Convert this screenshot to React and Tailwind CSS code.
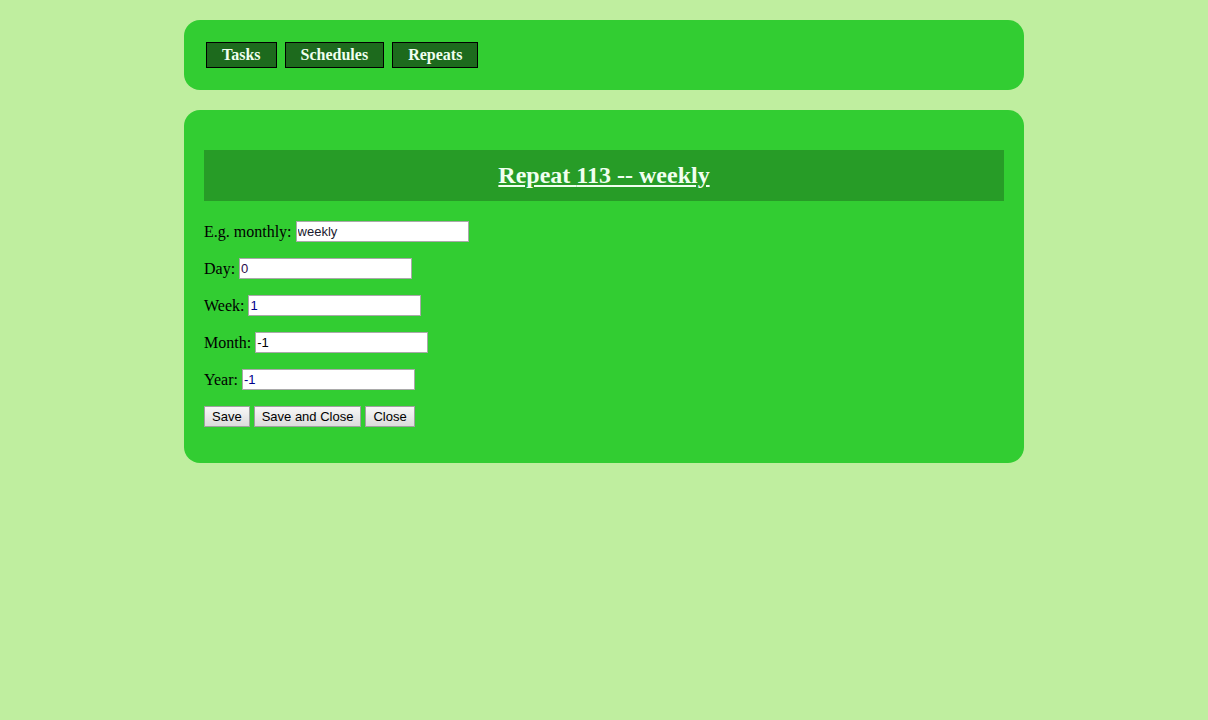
import { useState } from 'react'

const serif = { fontFamily: '"Liberation Serif", "Times New Roman", serif' }

function NavButton({ children }) {
  return (
    <button className="h-[26px] px-[15px] bg-[#1d6a1d] border border-black text-[#f0fff0] font-bold text-[16px] leading-none">
      {children}
    </button>
  )
}

function Field({ label, value, color }) {
  return (
    <div className="flex items-center h-[21px] mb-4">
      <span className="text-[16px] text-black mr-[4px]">{label}</span>
      <input
        className={`h-[21px] w-[173px] border border-[#a9a9a9] bg-white px-[1px] text-[13px] outline-none ${color}`}
        style={{ fontFamily: '"Liberation Sans", Arial, sans-serif' }}
        defaultValue={value}
      />
    </div>
  )
}

function FormButton({ children }) {
  return (
    <button
      className="h-[21px] px-[7px] border border-[#a0a0a0] bg-gradient-to-b from-[#f7f7f7] to-[#dcdcdc] text-[13px] text-black leading-none"
      style={{ fontFamily: '"Liberation Sans", Arial, sans-serif' }}
    >
      {children}
    </button>
  )
}

export default function App() {
  const [repeat] = useState({ id: 113, name: 'weekly', day: '0', week: '1', month: '-1', year: '-1' })

  return (
    <div className="min-h-screen bg-[#bfee9f] pt-5" style={serif}>
      <div className="w-[840px] ml-[184px]">
        <div className="bg-[#32cd32] rounded-2xl h-[70px] px-[22px] flex items-center gap-2">
          <NavButton>Tasks</NavButton>
          <NavButton>Schedules</NavButton>
          <NavButton>Repeats</NavButton>
        </div>

        <div className="bg-[#32cd32] rounded-2xl mt-5 px-5 pt-10 pb-[20px]">
          <div className="bg-[#279c27] h-[51px] flex items-center justify-center">
            <h1 className="text-[24px] font-bold text-[#f0fff0] underline -mt-[2px]">
              Repeat {repeat.id} -- {repeat.name}
            </h1>
          </div>

          <div className="mt-5">
            <Field label="E.g. monthly:" value={repeat.name} color="text-[#1a1a2e]" />
            <Field label="Day:" value={repeat.day} color="text-[#2a0a4a]" />
            <Field label="Week:" value={repeat.week} color="text-[#00008b]" />
            <Field label="Month:" value={repeat.month} color="text-black" />
            <Field label="Year:" value={repeat.year} color="text-[#00008b]" />
            <div className="flex gap-1 mb-4">
              <FormButton>Save</FormButton>
              <FormButton>Save and Close</FormButton>
              <FormButton>Close</FormButton>
            </div>
          </div>
        </div>
      </div>
    </div>
  )
}
